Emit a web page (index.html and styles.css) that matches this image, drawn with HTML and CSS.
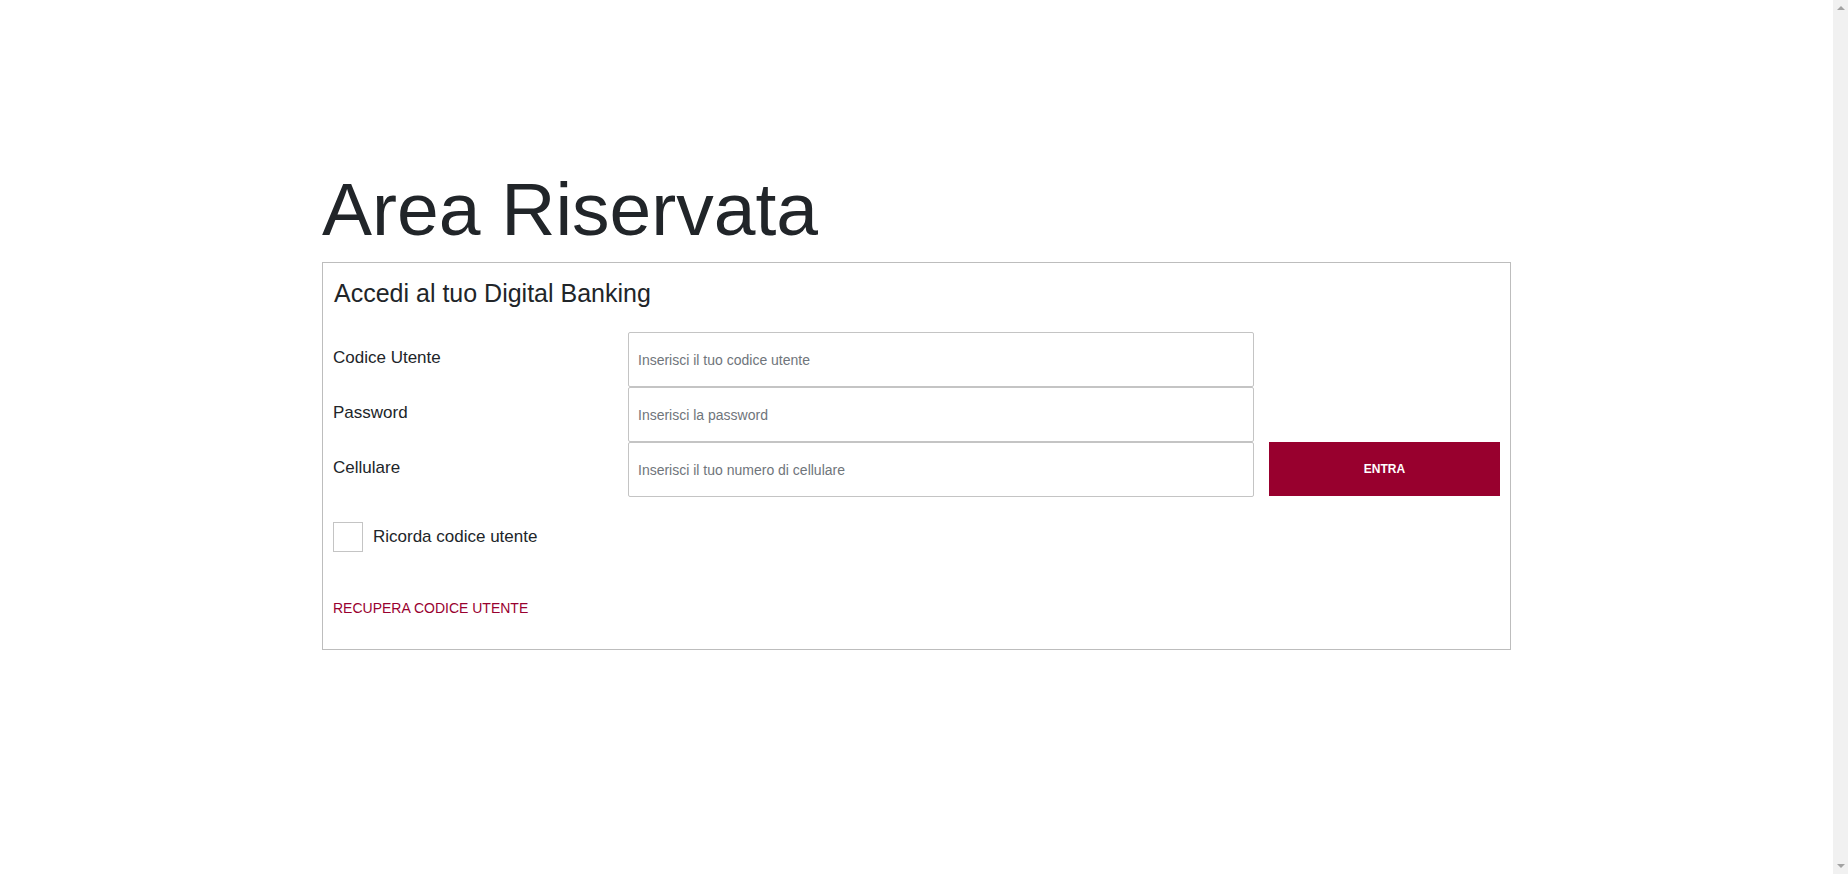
FILE: index.html
```html
<!DOCTYPE html>
<html lang="it">
<head>
<meta charset="utf-8">
<title>Area Riservata</title>
<link rel="stylesheet" href="styles.css">
</head>
<body>
<main class="page">
  <h1 class="title">Area Riservata</h1>
  <section class="login-box">
    <h2 class="subtitle">Accedi al tuo Digital Banking</h2>
    <form class="login-form">
      <label class="field-label" for="user">Codice Utente</label>
      <input class="field-input" id="user" type="text" placeholder="Inserisci il tuo codice utente">
      <span class="spacer"></span>
      <span class="spacer"></span>

      <label class="field-label" for="pwd">Password</label>
      <input class="field-input" id="pwd" type="password" placeholder="Inserisci la password">
      <span class="spacer"></span>
      <span class="spacer"></span>

      <label class="field-label" for="cell">Cellulare</label>
      <input class="field-input" id="cell" type="text" placeholder="Inserisci il tuo numero di cellulare">
      <span class="spacer"></span>
      <button class="btn-enter" type="button">ENTRA</button>
    </form>
    <label class="remember">
      <span class="checkbox"></span>
      <span class="remember-text">Ricorda codice utente</span>
    </label>
    <a class="recover" href="#">RECUPERA CODICE UTENTE</a>
  </section>
</main>
<div class="scrollbar" aria-hidden="true">
  <span class="arrow arrow-up"></span>
  <span class="arrow arrow-down"></span>
</div>
</body>
</html>
```

FILE: styles.css
```css
body {
  margin: 0;
  padding-right: 15px;
  font-family: "Liberation Sans", Arial, sans-serif;
  color: #212529;
  background: #ffffff;
}

.page {
  max-width: 1189px;
  margin: 0 auto;
  padding-top: 164px;
}

.title {
  margin: 0 0 8px 0;
  font-size: 75px;
  font-weight: 400;
  line-height: 1.2;
  color: #212529;
}

.login-box {
  border: 1px solid #bdbdbd;
  padding: 10px 10px 10px 10px;
}

.subtitle {
  margin: 5px 0 24px 1px;
  font-size: 25px;
  font-weight: 400;
  line-height: 1.2;
  color: #212529;
}

.login-form {
  display: grid;
  grid-template-columns: 295px 626px 15px 231px;
  grid-auto-rows: 55px;
  row-gap: 0;
}

.field-label {
  font-size: 17px;
  line-height: 1.5;
  padding-top: 13px;
  color: #212529;
}

.field-input {
  box-sizing: border-box;
  height: 55px;
  width: 100%;
  margin: 0;
  border: 1px solid #c4c4c4;
  border-radius: 2px;
  padding: 0 9px;
  font-family: "Liberation Sans", Arial, sans-serif;
  font-size: 14px;
  color: #212529;
  background: #ffffff;
  outline: none;
}

.field-input::placeholder {
  color: #6f757b;
  opacity: 1;
}

.btn-enter {
  align-self: start;
  height: 54px;
  margin-top: 0;
  border: 0;
  border-radius: 0;
  background: #98002e;
  color: #ffffff;
  font-family: "Liberation Sans", Arial, sans-serif;
  font-size: 12px;
  font-weight: 700;
  cursor: pointer;
}

.remember {
  display: flex;
  align-items: center;
  gap: 10px;
  margin-top: 25px;
}

.checkbox {
  box-sizing: border-box;
  width: 30px;
  height: 30px;
  border: 1px solid #c4c4c4;
  background: #ffffff;
}

.remember-text {
  font-size: 17px;
  line-height: 1.5;
  color: #212529;
}

.recover {
  display: block;
  margin: 46px 0 20px 0;
  font-size: 14px;
  line-height: 1.5;
  color: #99002f;
  text-decoration: none;
}

.scrollbar {
  position: fixed;
  top: 0;
  right: 0;
  bottom: 0;
  width: 15px;
  background: #f1f1f1;
  display: flex;
  flex-direction: column;
  justify-content: space-between;
  align-items: center;
  padding: 6px 0;
  box-sizing: border-box;
}

.arrow {
  width: 0;
  height: 0;
  border-left: 4px solid transparent;
  border-right: 4px solid transparent;
}

.arrow-up {
  border-bottom: 4px solid #a3a3a3;
}

.arrow-down {
  border-top: 4px solid #a3a3a3;
}
```
